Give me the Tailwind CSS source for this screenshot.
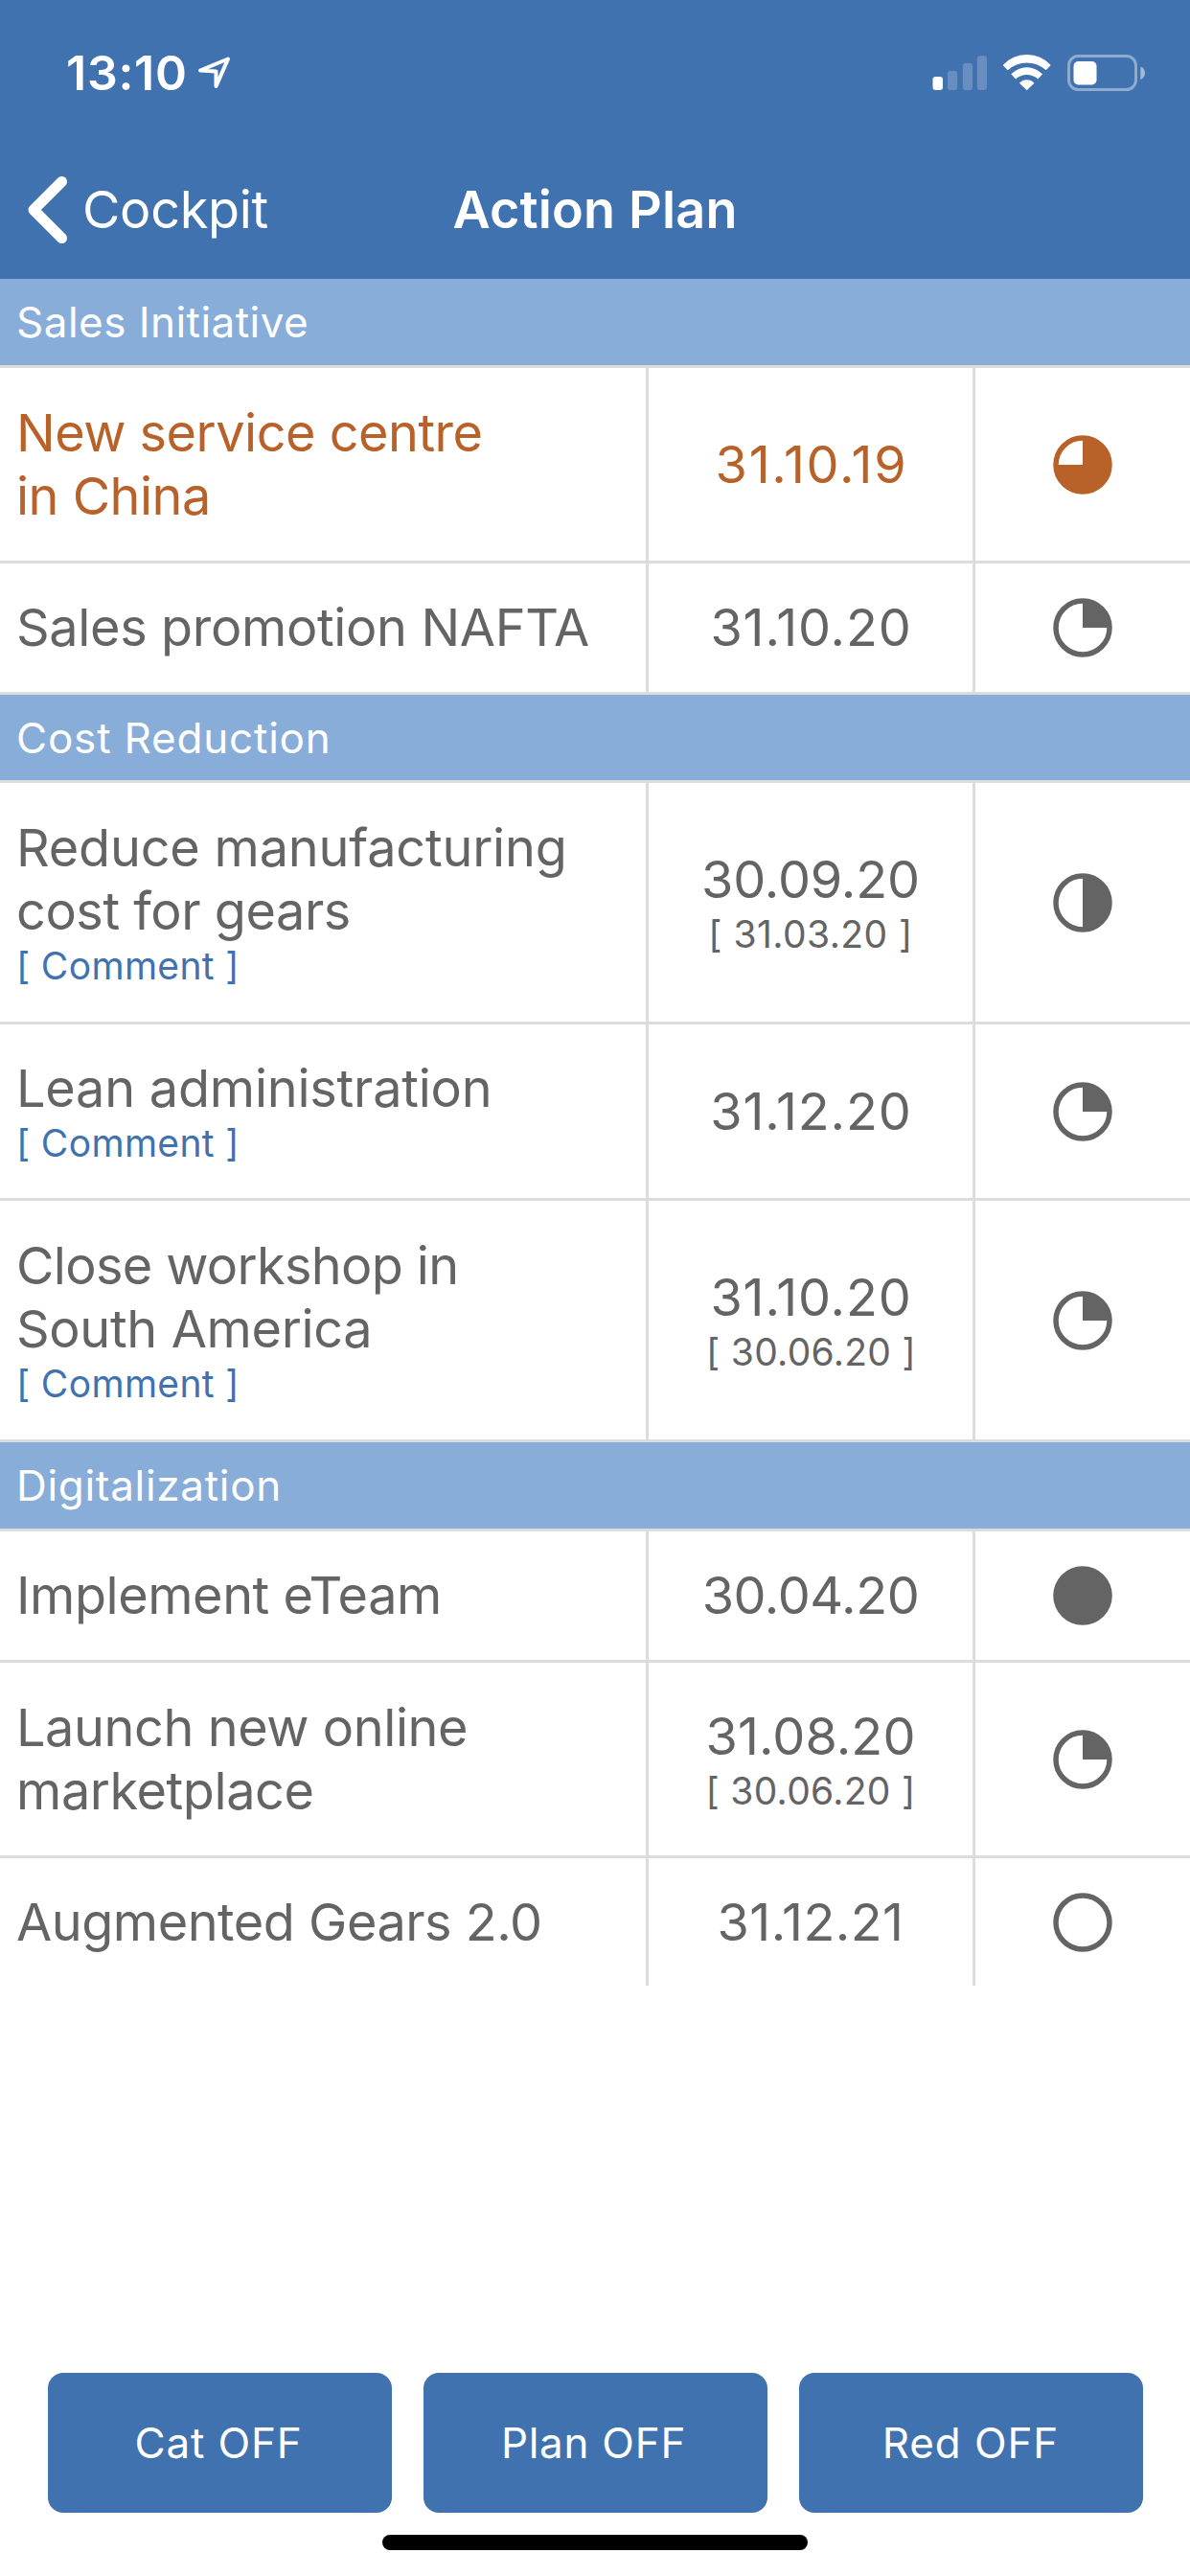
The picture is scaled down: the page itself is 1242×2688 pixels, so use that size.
<!DOCTYPE html>
<html lang="en">
<head>
  <meta charset="UTF-8">
  <meta name="viewport" content="width=device-width, initial-scale=1.0">
  <title>Action Plan</title>
  <script src="https://cdn.jsdelivr.net/npm/@tailwindcss/browser@4"></script>
</head>
<body class="bg-white font-['Inter','Liberation_Sans',sans-serif]">
  <div class="flex flex-col w-[1242px] h-[2688px] overflow-hidden whitespace-nowrap">

    <!-- Header -->
    <header class="h-[291px] bg-[#4172b0] text-white">
      <div class="flex items-center justify-between h-[146px] pt-[6px] pl-[69px] pr-[46px]">
        <div class="flex items-center">
          <span class="w-[137px] text-[50px] leading-none font-semibold tracking-[0.74px]">13:10</span>
          <svg class="w-9 h-9" viewBox="0 0 36 36" fill="none" stroke="currentColor" stroke-width="4" stroke-linejoin="round">
            <path d="M32 3.500L3 15.500l16.500 1V32z"/>
          </svg>
        </div>
        <div class="flex items-center">
          <!-- signal -->
          <svg class="w-[57px] h-[38px]" viewBox="0 0 57 38" fill="currentColor">
            <rect x="0.5" y="23" width="10.5" height="14" rx="3"/>
            <rect x="16" y="17" width="10.2" height="20" rx="3" opacity=".2"/>
            <rect x="31.8" y="9" width="10.2" height="28" rx="3" opacity=".2"/>
            <rect x="46.8" y="1.3" width="10.2" height="35.7" rx="3" opacity=".2"/>
          </svg>
          <!-- wifi -->
          <svg class="w-[52px] h-[38px] ml-4" viewBox="0 0 52 38" fill="currentColor">
            <path d="M.7 11a33.9 33.9 0 0 1 50 0l-5 5.2a29.5 29.5 0 0 0-40 0z"/>
            <path d="M9.3 20.3a22.8 22.8 0 0 1 32.8 0l-4.8 5.3a17 17 0 0 0-23.2 0z"/>
            <path d="M18 29.7a10.5 10.5 0 0 1 15.4 0L25.7 37.3z"/>
          </svg>
          <!-- battery -->
          <svg class="w-[82px] h-[38px] ml-4" viewBox="0 0 82 38" fill="none">
            <rect x="1.5" y="1.5" width="70" height="35" rx="10" stroke="#fff" stroke-width="3" opacity=".4"/>
            <rect x="6.5" y="7" width="24" height="24.5" rx="5" fill="#fff"/>
            <path d="M76.3 12.5c3 1 4.7 3.7 4.7 6.7s-1.7 5.7-4.7 6.7z" fill="#fff" opacity=".5"/>
          </svg>
        </div>
      </div>
      <div class="grid grid-cols-[1fr_auto_1fr] items-center h-[145px] text-[54px] leading-none">
        <div class="flex items-center pl-[29px]">
          <svg class="w-[41px] h-[70px]" viewBox="0 0 41 70" fill="none" stroke="currentColor" stroke-width="11" stroke-linecap="round" stroke-linejoin="round">
            <path d="M35.5 5.5L6 35l29.500 29.500"/>
          </svg>
          <span class="ml-4 tracking-[-0.34px]">Cockpit</span>
        </div>
        <h1 class="font-semibold tracking-[0.14px]">Action Plan</h1>
      </div>
    </header>

    <!-- Action list -->
    <main class="flex-1 text-[54px] leading-[66px] text-[#646464]">
      <h2 class="flex items-center h-[93px] pl-[17px] border-b-3 border-[#dcdcdc] bg-[#88add9] text-white text-[44px] tracking-[0.47px]">Sales Initiative</h2>

      <div class="grid grid-cols-[677px_341px_224px] h-[204px] border-b-3 border-[#dcdcdc] text-[#b86128]">
        <div class="flex flex-col justify-center pl-[17px] border-r-3 border-[#dcdcdc]">
          <p class="tracking-[-0.5px]">New service centre<br>in China</p>
        </div>
        <div class="flex flex-col items-center justify-center pl-[2px] border-r-3 border-[#dcdcdc]">
          <p class="tracking-[1.7px]">31.10.19</p>
        </div>
        <div class="flex items-center justify-center">
          <svg class="w-[62px] h-[62px]" viewBox="0 0 62 62">
            <circle cx="31" cy="31" r="28" fill="none" stroke="currentColor" stroke-width="5.5"/>
            <path d="M31 31V2a29 29 0 1 1-29 29z" fill="currentColor"/>
          </svg>
        </div>
      </div>

      <div class="grid grid-cols-[677px_341px_224px] h-[137px] border-b-3 border-[#dcdcdc]">
        <div class="flex flex-col justify-center pl-[17px] border-r-3 border-[#dcdcdc]">
          <p class="tracking-[-0.35px]">Sales promotion NAFTA</p>
        </div>
        <div class="flex flex-col items-center justify-center pl-px border-r-3 border-[#dcdcdc]">
          <p class="tracking-[0.85px]">31.10.20</p>
        </div>
        <div class="flex items-center justify-center">
          <svg class="w-[62px] h-[62px]" viewBox="0 0 62 62">
            <circle cx="31" cy="31" r="28" fill="none" stroke="currentColor" stroke-width="5.5"/>
            <path d="M31 31V2a29 29 0 0 1 29 29z" fill="currentColor"/>
          </svg>
        </div>
      </div>

      <h2 class="flex items-center h-[92px] pl-[17px] border-b-3 border-[#dcdcdc] bg-[#88add9] text-white text-[44px] tracking-[0.8px]">Cost Reduction</h2>

      <div class="grid grid-cols-[677px_341px_224px] h-[252px] border-b-3 border-[#dcdcdc]">
        <div class="flex flex-col justify-center pt-px pl-[17px] border-r-3 border-[#dcdcdc]">
          <p class="tracking-[-0.2px]">Reduce manufacturing<br><span class="tracking-[-0.45px]">cost for gears</span></p>
          <a href="#" class="text-[39px] leading-[48px] tracking-[0.33px] text-[#4172b0]">[ Comment ]</a>
        </div>
        <div class="flex flex-col items-center justify-center border-r-3 border-[#dcdcdc]">
          <p class="tracking-[-0.13px]">30.09.20</p>
          <p class="text-[39px] leading-[48px] tracking-[0.45px]">[ 31.03.20 ]</p>
        </div>
        <div class="flex items-center justify-center">
          <svg class="w-[62px] h-[62px]" viewBox="0 0 62 62">
            <circle cx="31" cy="31" r="28" fill="none" stroke="currentColor" stroke-width="5.5"/>
            <path d="M31 2a29 29 0 0 1 0 58z" fill="currentColor"/>
          </svg>
        </div>
      </div>

      <div class="grid grid-cols-[677px_341px_224px] h-[184px] border-b-3 border-[#dcdcdc]">
        <div class="flex flex-col justify-center pt-px pl-[17px] border-r-3 border-[#dcdcdc]">
          <p class="tracking-[-0.22px]">Lean administration</p>
          <a href="#" class="text-[39px] leading-[48px] tracking-[0.33px] text-[#4172b0]">[ Comment ]</a>
        </div>
        <div class="flex flex-col items-center justify-center pl-px border-r-3 border-[#dcdcdc]">
          <p class="tracking-[0.85px]">31.12.20</p>
        </div>
        <div class="flex items-center justify-center">
          <svg class="w-[62px] h-[62px]" viewBox="0 0 62 62">
            <circle cx="31" cy="31" r="28" fill="none" stroke="currentColor" stroke-width="5.5"/>
            <path d="M31 31V2a29 29 0 0 1 29 29z" fill="currentColor"/>
          </svg>
        </div>
      </div>

      <div class="grid grid-cols-[677px_341px_224px] h-[252px] border-b-3 border-[#dcdcdc]">
        <div class="flex flex-col justify-center pt-px pl-[17px] border-r-3 border-[#dcdcdc]">
          <p class="tracking-[-0.65px]">Close workshop in<br><span class="tracking-[-0.35px]">South America</span></p>
          <a href="#" class="text-[39px] leading-[48px] tracking-[0.33px] text-[#4172b0]">[ Comment ]</a>
        </div>
        <div class="flex flex-col items-center justify-center pl-px border-r-3 border-[#dcdcdc]">
          <p class="tracking-[0.85px]">31.10.20</p>
          <p class="text-[39px] leading-[48px] tracking-[0.28px]">[ 30.06.20 ]</p>
        </div>
        <div class="flex items-center justify-center">
          <svg class="w-[62px] h-[62px]" viewBox="0 0 62 62">
            <circle cx="31" cy="31" r="28" fill="none" stroke="currentColor" stroke-width="5.5"/>
            <path d="M31 31V2a29 29 0 0 1 29 29z" fill="currentColor"/>
          </svg>
        </div>
      </div>

      <h2 class="flex items-center h-[93px] pl-[17px] border-b-3 border-[#dcdcdc] bg-[#88add9] text-white text-[44px] tracking-[0.7px]">Digitalization</h2>

      <div class="grid grid-cols-[677px_341px_224px] h-[137px] border-b-3 border-[#dcdcdc]">
        <div class="flex flex-col justify-center pl-[17px] border-r-3 border-[#dcdcdc]">
          <p class="tracking-[-0.44px]">Implement eTeam</p>
        </div>
        <div class="flex flex-col items-center justify-center border-r-3 border-[#dcdcdc]">
          <p class="tracking-[-0.4px]">30.04.20</p>
        </div>
        <div class="flex items-center justify-center">
          <svg class="w-[62px] h-[62px]" viewBox="0 0 62 62">
            <circle cx="31" cy="31" r="30.8" fill="currentColor"/>
          </svg>
        </div>
      </div>

      <div class="grid grid-cols-[677px_341px_224px] h-[204px] border-b-3 border-[#dcdcdc]">
        <div class="flex flex-col justify-center pl-[17px] border-r-3 border-[#dcdcdc]">
          <p class="tracking-[-0.42px]">Launch new online<br>marketplace</p>
        </div>
        <div class="flex flex-col items-center justify-center border-r-3 border-[#dcdcdc]">
          <p class="tracking-[0.1px]">31.08.20</p>
          <p class="text-[39px] leading-[48px] tracking-[0.28px]">[ 30.06.20 ]</p>
        </div>
        <div class="flex items-center justify-center">
          <svg class="w-[62px] h-[62px]" viewBox="0 0 62 62">
            <circle cx="31" cy="31" r="28" fill="none" stroke="currentColor" stroke-width="5.5"/>
            <path d="M31 31V2a29 29 0 0 1 29 29z" fill="currentColor"/>
          </svg>
        </div>
      </div>

      <div class="grid grid-cols-[677px_341px_224px] h-[133px]">
        <div class="flex flex-col justify-center pl-[17px] border-r-3 border-[#dcdcdc]">
          <p class="tracking-[-0.48px]">Augmented Gears 2.0</p>
        </div>
        <div class="flex flex-col items-center justify-center border-r-3 border-[#dcdcdc]">
          <p class="tracking-[0.4px]">31.12.21</p>
        </div>
        <div class="flex items-center justify-center">
          <svg class="w-[62px] h-[62px]" viewBox="0 0 62 62">
            <circle cx="31" cy="31" r="28" fill="none" stroke="currentColor" stroke-width="5.5"/>
          </svg>
        </div>
      </div>
    </main>

    <!-- Filter buttons -->
    <footer class="h-[212px]">
      <div class="grid grid-cols-3 gap-[33px] px-[49.5px] text-[44px] leading-none text-white">
        <button class="h-[146px] pr-[2px] rounded-2xl bg-[#4172b0] tracking-[0.84px]">Cat OFF</button>
        <button class="h-[146px] pr-[3px] rounded-2xl bg-[#4172b0] tracking-[0.72px]">Plan OFF</button>
        <button class="h-[146px] rounded-2xl bg-[#4172b0] tracking-[0.89px]">Red OFF</button>
      </div>
      <div class="w-[444px] h-4 mt-[23px] mx-auto rounded-full bg-black"></div>
    </footer>
  </div>
</body>
</html>
